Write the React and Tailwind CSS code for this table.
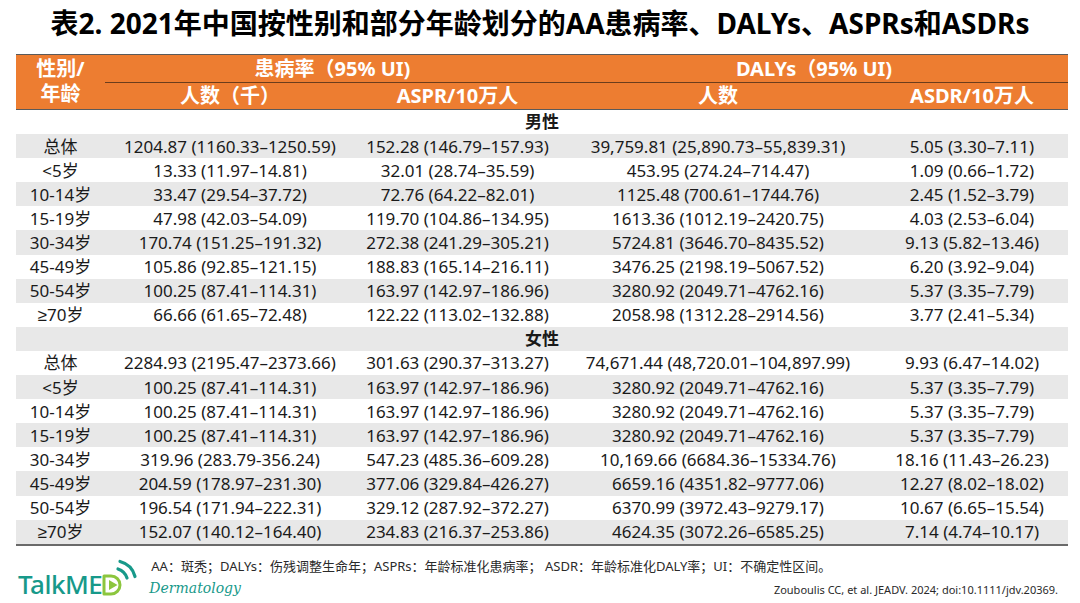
import React from "react";

// 表格数据
const male = [
  ["总体", "1204.87 (1160.33–1250.59)", "152.28 (146.79–157.93)", "39,759.81 (25,890.73–55,839.31)", "5.05 (3.30–7.11)"],
  ["<5岁", "13.33 (11.97–14.81)", "32.01 (28.74–35.59)", "453.95 (274.24–714.47)", "1.09 (0.66–1.72)"],
  ["10-14岁", "33.47 (29.54–37.72)", "72.76 (64.22–82.01)", "1125.48 (700.61–1744.76)", "2.45 (1.52–3.79)"],
  ["15-19岁", "47.98 (42.03–54.09)", "119.70 (104.86–134.95)", "1613.36 (1012.19–2420.75)", "4.03 (2.53–6.04)"],
  ["30-34岁", "170.74 (151.25–191.32)", "272.38 (241.29–305.21)", "5724.81 (3646.70–8435.52)", "9.13 (5.82–13.46)"],
  ["45-49岁", "105.86 (92.85–121.15)", "188.83 (165.14–216.11)", "3476.25 (2198.19–5067.52)", "6.20 (3.92–9.04)"],
  ["50-54岁", "100.25 (87.41–114.31)", "163.97 (142.97–186.96)", "3280.92 (2049.71–4762.16)", "5.37 (3.35–7.79)"],
  ["≥70岁", "66.66 (61.65–72.48)", "122.22 (113.02–132.88)", "2058.98 (1312.28–2914.56)", "3.77 (2.41–5.34)"],
];

const female = [
  ["总体", "2284.93 (2195.47–2373.66)", "301.63 (290.37–313.27)", "74,671.44 (48,720.01–104,897.99)", "9.93 (6.47–14.02)"],
  ["<5岁", "100.25 (87.41–114.31)", "163.97 (142.97–186.96)", "3280.92 (2049.71–4762.16)", "5.37 (3.35–7.79)"],
  ["10-14岁", "100.25 (87.41–114.31)", "163.97 (142.97–186.96)", "3280.92 (2049.71–4762.16)", "5.37 (3.35–7.79)"],
  ["15-19岁", "100.25 (87.41–114.31)", "163.97 (142.97–186.96)", "3280.92 (2049.71–4762.16)", "5.37 (3.35–7.79)"],
  ["30-34岁", "319.96 (283.79-356.24)", "547.23 (485.36–609.28)", "10,169.66 (6684.36–15334.76)", "18.16 (11.43–26.23)"],
  ["45-49岁", "204.59 (178.97–231.30)", "377.06 (329.84–426.27)", "6659.16 (4351.82–9777.06)", "12.27 (8.02–18.02)"],
  ["50-54岁", "196.54 (171.94–222.31)", "329.12 (287.92–372.27)", "6370.99 (3972.43–9279.17)", "10.67 (6.65–15.54)"],
  ["≥70岁", "152.07 (140.12–164.40)", "234.83 (216.37–253.86)", "4624.35 (3072.26–6585.25)", "7.14 (4.74–10.17)"],
];

const cols = "grid grid-cols-[89px_250px_205px_316px_192px]";

function DataRow({ cells, gray }) {
  return (
    <div className={`${cols} h-[24.1px] items-center ${gray ? "bg-[#e8e8e8]" : "bg-white"}`}>
      {cells.map((c, i) => (
        <div key={i} className="text-center whitespace-nowrap leading-none">
          {c}
        </div>
      ))}
    </div>
  );
}

function GroupRow({ label, gray }) {
  return (
    <div className={`h-[24.1px] flex items-center justify-center font-bold ${gray ? "bg-[#e8e8e8]" : "bg-white"}`}>
      {label}
    </div>
  );
}

function Logo() {
  return (
    <div className="flex items-end">
      <span className="text-[26px] leading-none font-medium text-[#17998a] tracking-[-0.5px] pb-[3px]">
        TalkME
      </span>
      <svg width="38" height="42" viewBox="0 0 38 42" className="-ml-[1px]">
        {/* D with play button */}
        <path d="M3 18 h7 a9 9 0 0 1 0 18 h-7 z" fill="none" stroke="#8cc63e" strokeWidth="3" strokeLinejoin="round" />
        <path d="M8 22 l8.5 5 l-8.5 5 z" fill="#8cc63e" />
        {/* signal arcs */}
        <path d="M17 11 a14 14 0 0 1 9 9" fill="none" stroke="#17998a" strokeWidth="3.2" strokeLinecap="round" />
        <path d="M19 3.5 a21 21 0 0 1 15 15" fill="none" stroke="#17998a" strokeWidth="3.2" strokeLinecap="round" />
      </svg>
    </div>
  );
}

export default function App() {
  return (
    <div
      className="w-[1080px] h-[603px] bg-white text-[#1a1a1a] overflow-hidden"
      style={{ fontFamily: '"Noto Sans", "Liberation Sans", "Noto Sans CJK SC", sans-serif' }}
    >
      {/* 标题 */}
      <h1 className="text-[28px] font-bold text-center leading-[34px] pt-[6px] h-[54px] text-black">
        表2. 2021年中国按性别和部分年龄划分的AA患病率、DALYs、ASPRs和ASDRs
      </h1>

      <div className="w-[1052px] ml-[16px]">
        {/* 表头 */}
        <div className={`${cols} bg-[#ed7d31] text-white font-bold text-[20px] border-t-[1.5px] border-b-[1.5px] border-[#5a5a5a]`}>
          <div className="row-span-2 flex flex-col items-center justify-center leading-[25px] pb-[2px]">
            <span>性别/</span>
            <span>年龄</span>
          </div>
          <div className="col-span-2 h-[28px] flex items-center justify-center border-b-[1.5px] border-[#6b3d1c] leading-none">
            患病率（95% UI)
          </div>
          <div className="col-span-2 h-[28px] flex items-center justify-center border-b-[1.5px] border-[#6b3d1c] leading-none">
            DALYs（95% UI)
          </div>
          <div className="h-[26px] flex items-center justify-center leading-none">人数（千）</div>
          <div className="h-[26px] flex items-center justify-center leading-none">ASPR/10万人</div>
          <div className="h-[26px] flex items-center justify-center leading-none">人数</div>
          <div className="h-[26px] flex items-center justify-center leading-none">ASDR/10万人</div>
        </div>

        {/* 表体 */}
        <div className="text-[17px] border-b-2 border-[#6a6a6a]">
          <GroupRow label="男性" gray={false} />
          {male.map((r, i) => (
            <DataRow key={"m" + i} cells={r} gray={i % 2 === 0} />
          ))}
          <GroupRow label="女性" gray={true} />
          {female.map((r, i) => (
            <DataRow key={"f" + i} cells={r} gray={i % 2 === 1} />
          ))}
        </div>
      </div>

      {/* 页脚 */}
      <div className="flex pl-[18px] pr-[22px]">
        <div className="pt-[12px]">
          <Logo />
        </div>
        <div className="flex-1 pl-[12px]">
          <div className="text-[13px] leading-[18px] pt-[11px] text-[#2a2a2a] whitespace-nowrap">
            AA：斑秃；DALYs：伤残调整生命年；ASPRs：年龄标准化患病率； ASDR：年龄标准化DALY率；UI：不确定性区间。
          </div>
          <div className="flex items-end justify-between mt-[2px]">
            <span
              className="text-[14px] italic text-[#17998a] leading-none -ml-[2px] pt-[4px]"
              style={{ fontFamily: '"DejaVu Serif", serif' }}
            >
              Dermatology
            </span>
            <span className="text-[11px] text-[#2a2a2a] leading-none">
              Zouboulis CC, et al. JEADV. 2024; doi:10.1111/jdv.20369.
            </span>
          </div>
        </div>
      </div>
    </div>
  );
}
